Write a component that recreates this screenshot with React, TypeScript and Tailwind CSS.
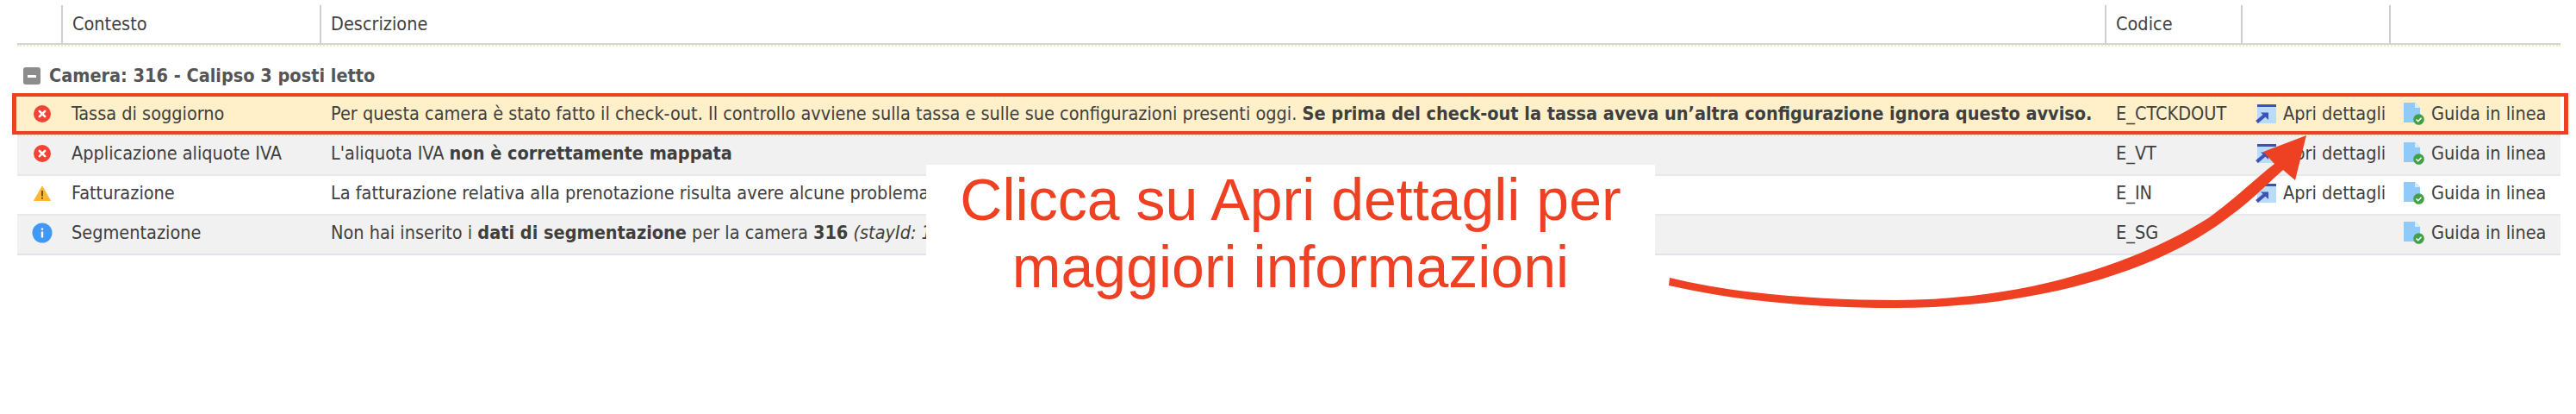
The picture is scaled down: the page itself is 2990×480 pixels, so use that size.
import * as React from "react";

const cols = "grid grid-cols-[51px_300px_2072px_158px_172px_199px]";

function ErrorIcon() {
  return (
    <svg width="24" height="20" viewBox="0 0 24 20">
      <circle cx="12" cy="10" r="10" fill="#f44336" />
      <path d="M8.8 6.8l6.4 6.4M15.2 6.8l-6.4 6.4" stroke="#fff" strokeWidth="2.6" strokeLinecap="round" />
    </svg>
  );
}

function WarnIcon() {
  return (
    <svg width="24" height="18" viewBox="0 0 24 18">
      <path d="M12 1L21.5 17.5H2.5Z" fill="#fdb833" stroke="#fdb833" strokeLinejoin="round" />
      <path d="M12 6v6.5M12 13.8v2" stroke="#6b4a10" strokeWidth="1.8" />
    </svg>
  );
}

function InfoIcon() {
  return (
    <svg width="24" height="24" viewBox="0 0 24 24">
      <circle cx="12" cy="12" r="11.5" fill="#3f97f6" />
      <path d="M12 10.5v7M12 6.5v2.2" stroke="#fff" strokeWidth="2.4" />
    </svg>
  );
}

function OpenIcon() {
  return (
    <svg width="24" height="23" viewBox="0 0 24 23" className="shrink-0">
      <rect x="2" y="0" width="22" height="22" fill="#b9dcfb" />
      <rect x="2" y="0" width="22" height="3" fill="#3f51b5" />
      <path d="M1.5 20.5L11 12.5" stroke="#3f51b5" strokeWidth="4" />
      <path d="M6 9.5H15V18Z" fill="#3f51b5" />
    </svg>
  );
}

function GuideIcon() {
  return (
    <svg width="24" height="26" viewBox="0 0 24 26" className="shrink-0">
      <path d="M0 0h13l6 6v17H0Z" fill="#90caf9" />
      <path d="M13 0l6 6h-6Z" fill="#d6ebfc" />
      <circle cx="17.5" cy="19.5" r="6.3" fill="#43a047" />
      <path d="M14.5 19.5l2.2 2.2 3.8-4" stroke="#fff" strokeWidth="1.6" fill="none" />
    </svg>
  );
}

interface Row {
  icon: React.ReactNode;
  context: string;
  description: React.ReactNode;
  code: string;
  details: boolean;
  bg: string;
}

const rows: Row[] = [
  {
    icon: <ErrorIcon />,
    context: "Tassa di soggiorno",
    description: (
      <>
        Per questa camera è stato fatto il check-out. Il controllo avviene sulla tassa e sulle sue configurazioni presenti oggi.{" "}
        <b>Se prima del check-out la tassa aveva un’altra configurazione ignora questo avviso.</b>
      </>
    ),
    code: "E_CTCKDOUT",
    details: true,
    bg: "bg-[#fff0c9] border-b-2 border-dotted border-[#f3e3b5]",
  },
  {
    icon: <ErrorIcon />,
    context: "Applicazione aliquote IVA",
    description: (
      <>
        L'aliquota IVA <b>non è correttamente mappata</b>
      </>
    ),
    code: "E_VT",
    details: true,
    bg: "bg-[#f1f1f1] border-b-2 border-[#e8e8e8]",
  },
  {
    icon: <WarnIcon />,
    context: "Fatturazione",
    description: "La fatturazione relativa alla prenotazione risulta avere alcune problematiche",
    code: "E_IN",
    details: true,
    bg: "bg-white border-b-2 border-[#e8e8e8]",
  },
  {
    icon: <InfoIcon />,
    context: "Segmentazione",
    description: (
      <>
        Non hai inserito i <b>dati di segmentazione</b> per la camera <b>316</b> <i>(stayId: 1)</i>
      </>
    ),
    code: "E_SG",
    details: false,
    bg: "bg-[#f1f1f1] border-b-2 border-[#dfe3ec]",
  },
];

export default function App() {
  return (
    <div className="relative h-[480px] w-[2990px] overflow-hidden bg-white pt-[6px] pl-[20px] font-['DejaVu_Sans',sans-serif] text-[21.5px] [font-stretch:condensed] text-[#3f3f3f]">
      <div className="w-[2952px]">
        <div className="border-b-2 border-dotted border-[#f5e9c4]">
          <div className={`${cols} h-[46px] border-b-2 border-[#d4d4d4]`}>
            <div />
            {["Contesto", "Descrizione", "Codice", "", ""].map((h, i) => (
              <div key={i} className="flex items-center border-l-2 border-[#cfcfcf] pl-[11px]">
                {h}
              </div>
            ))}
          </div>
        </div>
        <div className="flex h-[58px] items-center gap-[10px] pl-[7px] pt-[10px] font-bold text-[#555]">
          <span className="flex h-[20px] w-[20px] items-center justify-center rounded-[3px] bg-[#8c8c8c]">
            <span className="h-[3px] w-[10px] bg-white" />
          </span>
          Camera: 316 - Calipso 3 posti letto
        </div>
        {rows.map((r) => (
          <div key={r.code} className={`${cols} h-[46px] pb-[4px] ${r.bg}`}>
            <div className="flex items-center pl-[17px]">{r.icon}</div>
            <div className="flex items-center whitespace-nowrap pl-[12px]">{r.context}</div>
            <div className="flex items-center overflow-hidden whitespace-nowrap pl-[13px]">
              <span>{r.description}</span>
            </div>
            <div className="flex items-center pl-[13px]">{r.code}</div>
            <div className="flex items-center gap-[8px] pl-[17px]">
              {r.details && (
                <>
                  <OpenIcon />
                  Apri dettagli
                </>
              )}
            </div>
            <div className="flex items-center gap-[8px] pl-[17px]">
              <GuideIcon />
              Guida in linea
            </div>
          </div>
        ))}
      </div>

      {/* annotations laid over the screenshot */}
      <div className="absolute left-[14px] top-[108px] h-[48px] w-[2967px] border-x-[5px] border-y-4 border-[#ee4023]" />
      <div className="absolute left-[1075px] top-[191px] h-[170px] w-[846px] bg-white pt-[1px] text-center font-['Liberation_Sans',sans-serif] text-[68px] leading-[78px] [font-stretch:normal] text-[#ee4023]">
        Clicca su Apri dettagli per
        <br />
        maggiori informazioni
      </div>
      <svg className="absolute left-0 top-0" width="2990" height="480" viewBox="0 0 2990 480">
        <path
          d="M1938 322C2010 340 2110 348 2201 348C2350 348 2480 305 2563 253C2595 230 2620 205 2640 190L2627 176L2677 157L2664 209L2650 197C2630 215 2610 235 2589 250C2500 320 2350 357 2201 357C2110 357 2020 350 1937 331Z"
          fill="#ee4023"
        />
      </svg>
    </div>
  );
}
